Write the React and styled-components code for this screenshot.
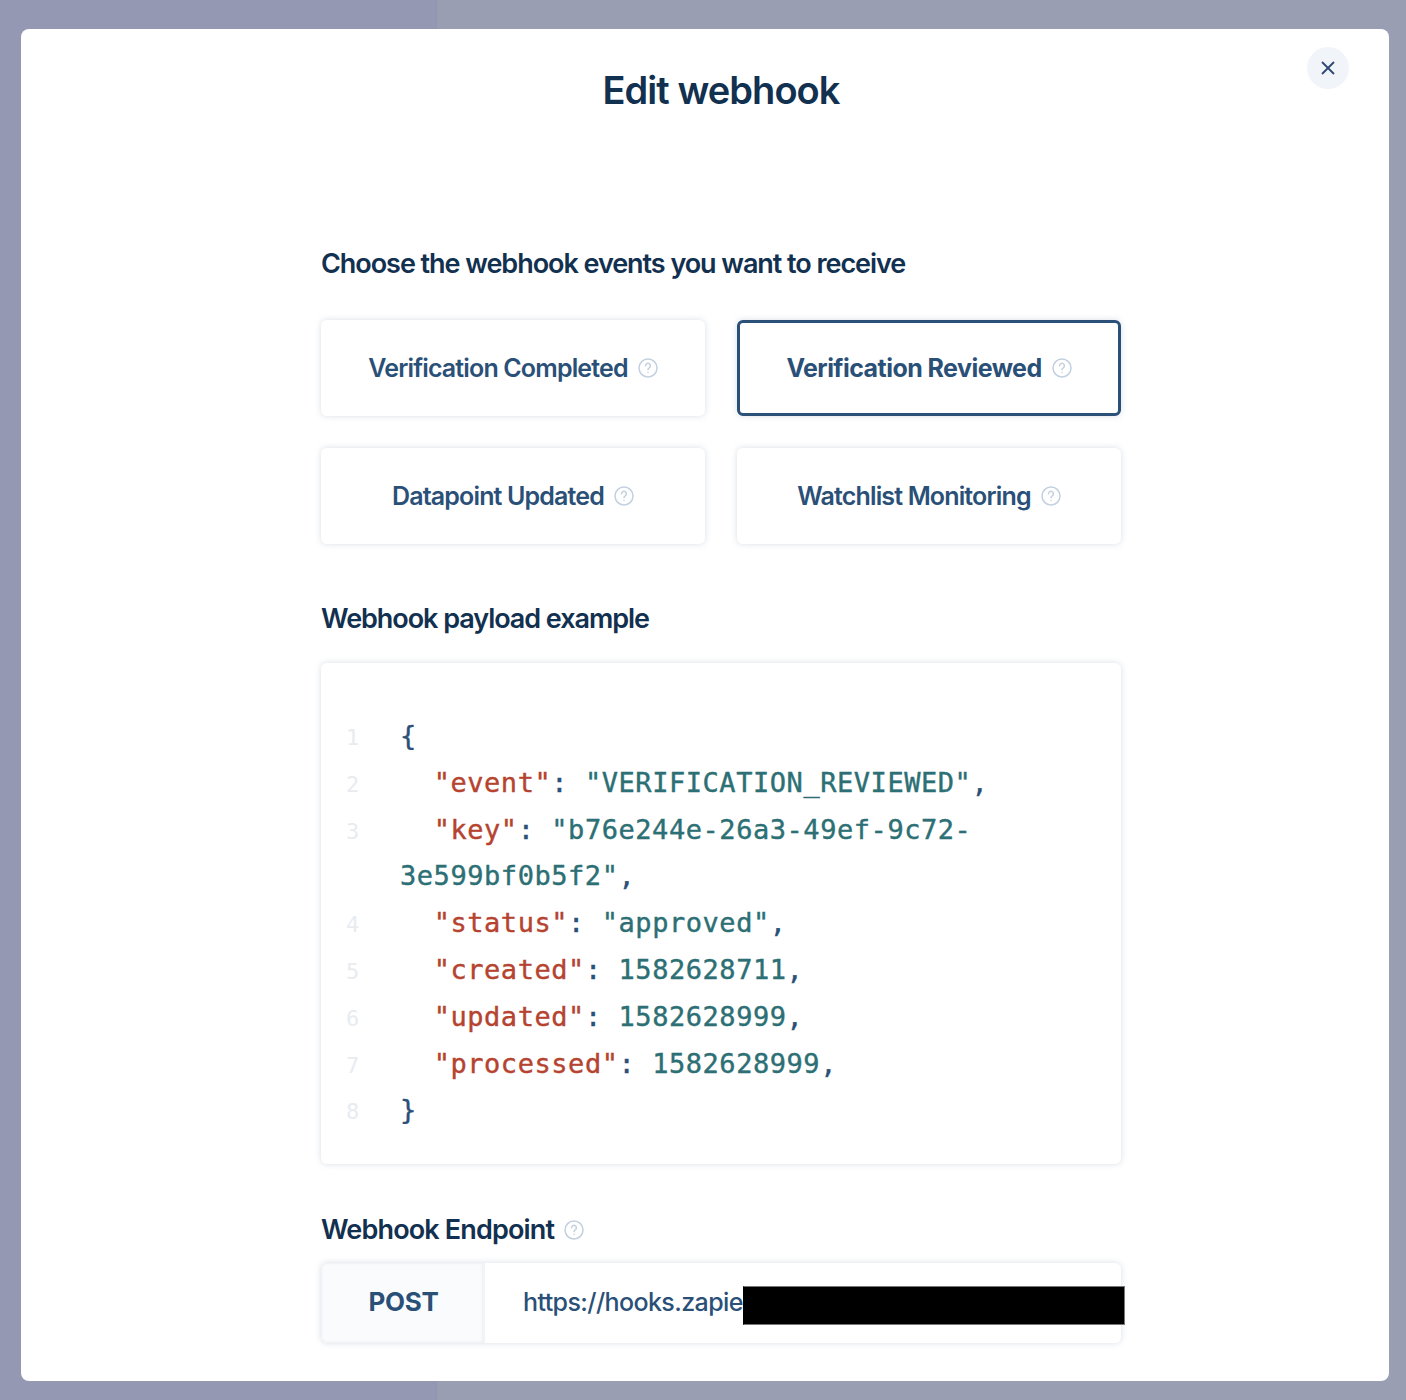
import React from "react";
import styled, { createGlobalStyle } from "styled-components";

const GlobalStyle = createGlobalStyle`
  html, body {
    margin: 0;
    padding: 0;
    background: #9a9eb3;
    font-family: Inter, "Liberation Sans", sans-serif;
  }
`;

const Page = styled.div`
  position: relative;
  display: flex;
  width: 1406px;
  height: 1400px;
  overflow: hidden;
`;

const Sidebar = styled.div`
  width: 436px;
  background: #9598b2;
  border-right: 1px solid #9195b0;
`;

const Main = styled.div`
  flex: 1;
  background: #9a9eb3;
`;

const Modal = styled.div`
  position: absolute;
  left: 21px;
  top: 29px;
  width: 1368px;
  height: 1352px;
  box-sizing: border-box;
  padding: 38px 0 0 300px;
  background: #fff;
  border-radius: 8px;
  overflow: hidden;
`;

const CloseButton = styled.button`
  position: absolute;
  top: 18px;
  right: 40px;
  width: 42px;
  height: 42px;
  padding: 0;
  display: flex;
  align-items: center;
  justify-content: center;
  border: none;
  border-radius: 50%;
  background: #f1f4f8;
  color: #2b4a70;
`;

const Title = styled.h1`
  width: 800px;
  margin: 0;
  text-align: center;
  font-size: 38px;
  line-height: 46px;
  font-weight: 600;
  letter-spacing: -0.95px;
  color: #12304f;
`;

const Content = styled.div`
  width: 800px;
  margin-top: 135px;
`;

const SectionTitle = styled.h2`
  margin: 0;
  display: flex;
  align-items: center;
  gap: 10px;
  font-size: 27px;
  line-height: 32px;
  font-weight: 600;
  letter-spacing: -1.05px;
  color: #12304f;
`;

const EventGrid = styled.div`
  display: grid;
  grid-template-columns: 384px 384px;
  gap: 32px;
  margin-top: 40px;
`;

const EventCard = styled.div`
  height: 96px;
  box-sizing: border-box;
  display: flex;
  align-items: center;
  justify-content: center;
  gap: 10px;
  background: #fff;
  border-radius: 6px;
  border: ${({ $selected }) => ($selected ? "3px solid #2a5078" : "none")};
  box-shadow: 0 0 6px rgba(60, 90, 130, 0.2);
  font-size: 25px;
  font-weight: ${({ $selected }) => ($selected ? 700 : 600)};
  letter-spacing: ${({ $selected }) => ($selected ? "-0.55px" : "-0.85px")};
  color: #2a5078;
`;

const HelpIcon = styled.svg`
  width: 20px;
  height: 20px;
  flex: none;
  color: #c3d0df;
`;

const PayloadTitle = styled(SectionTitle)`
  margin-top: 59px;
`;

const CodeCard = styled.div`
  margin-top: 28px;
  height: 501px;
  box-sizing: border-box;
  padding: 50px 26px 0;
  background: #fff;
  border-radius: 6px;
  box-shadow: 0 0 6px rgba(60, 90, 130, 0.2);
  font-family: "DejaVu Sans Mono", "Liberation Mono", monospace;
  font-size: 27px;
  line-height: 46.8px;
  letter-spacing: 0.55px;
  -webkit-text-stroke: 0.4px;
`;

const CodeLine = styled.div`
  display: flex;
`;

const LineNumber = styled.span`
  width: 53px;
  margin-left: -1px;
  margin-right: 1px;
  flex: none;
  transform: translateY(2px);
  font-size: 22px;
  letter-spacing: 0;
  -webkit-text-stroke: 0;
  color: #e8ecf1;
`;

const LineText = styled.span`
  white-space: pre-wrap;
  color: #2a5078;
`;

const Key = styled.span`
  color: #b5432f;
`;

const Value = styled.span`
  color: #2c6f74;
`;

const EndpointTitle = styled(SectionTitle)`
  margin-top: 50px;
  letter-spacing: -0.85px;
`;

const Endpoint = styled.div`
  position: relative;
  display: flex;
  height: 80px;
  margin-top: 17px;
  background: #fff;
  border-radius: 6px;
  box-shadow: 0 0 6px rgba(60, 90, 130, 0.2);
`;

const Method = styled.div`
  width: 164px;
  box-sizing: border-box;
  padding: 0 0 3px 3px;
  display: flex;
  align-items: center;
  justify-content: center;
  background: #fafbfd;
  border-right: 2px solid #f0f3f7;
  border-radius: 6px 0 0 6px;
  box-shadow: inset 0 0 3px rgba(60, 90, 130, 0.12);
  font-size: 26px;
  font-weight: 700;
  letter-spacing: -0.3px;
  color: #2a5078;
`;

const Url = styled.div`
  display: flex;
  align-items: center;
  padding: 0 0 2px 38px;
  font-size: 25px;
  font-weight: 550;
  letter-spacing: -0.6px;
  color: #2a5078;
`;

const Redaction = styled.div`
  position: absolute;
  left: 422px;
  top: 23px;
  width: 382px;
  height: 39px;
  box-sizing: border-box;
  background: #000;
  border: 1px solid #777;
  border-left-color: #000;
`;

const Help = () => (
  <HelpIcon viewBox="0 0 20 20" fill="none" stroke="currentColor" strokeWidth="1.5" strokeLinecap="round">
    <circle cx="10" cy="10" r="9" />
    <path d="M7.6 7.8a2.4 2.4 0 1 1 3.7 2c-.9.5-1.3 1-1.3 1.9" />
    <path d="M10 14.4v.1" />
  </HelpIcon>
);

const events = [
  { name: "Verification Completed" },
  { name: "Verification Reviewed", selected: true },
  { name: "Datapoint Updated" },
  { name: "Watchlist Monitoring" },
];

const pair = (name, value) => (
  <>
    {"  "}
    <Key>"{name}"</Key>: <Value>{value}</Value>,
  </>
);

const lines = [
  "{",
  pair("event", '"VERIFICATION_REVIEWED"'),
  <>
    {"  "}
    <Key>"key"</Key>: <Value>"b76e244e-26a3-49ef-9c72-</Value>
    <br />
    <Value>3e599bf0b5f2"</Value>,
  </>,
  pair("status", '"approved"'),
  pair("created", "1582628711"),
  pair("updated", "1582628999"),
  pair("processed", "1582628999"),
  "}",
];

const App = () => {
  return (
    <Page>
      <GlobalStyle />
      <Sidebar />
      <Main />
      <Modal>
        <CloseButton aria-label="Close">
          <svg width="16" height="16" viewBox="0 0 16 16" stroke="currentColor" strokeWidth="1.8">
            <path d="M2 2l12 12M14 2L2 14" />
          </svg>
        </CloseButton>
        <Title>Edit webhook</Title>
        <Content>
          <SectionTitle>Choose the webhook events you want to receive</SectionTitle>
          <EventGrid>
            {events.map((event) => (
              <EventCard key={event.name} $selected={event.selected}>
                {event.name}
                <Help />
              </EventCard>
            ))}
          </EventGrid>
          <PayloadTitle>Webhook payload example</PayloadTitle>
          <CodeCard>
            {lines.map((line, i) => (
              <CodeLine key={i}>
                <LineNumber>{i + 1}</LineNumber>
                <LineText>{line}</LineText>
              </CodeLine>
            ))}
          </CodeCard>
          <EndpointTitle>
            Webhook Endpoint
            <Help />
          </EndpointTitle>
          <Endpoint>
            <Method>POST</Method>
            <Url>https://hooks.zapier.com/</Url>
            <Redaction />
          </Endpoint>
        </Content>
      </Modal>
    </Page>
  );
};

export default App;
